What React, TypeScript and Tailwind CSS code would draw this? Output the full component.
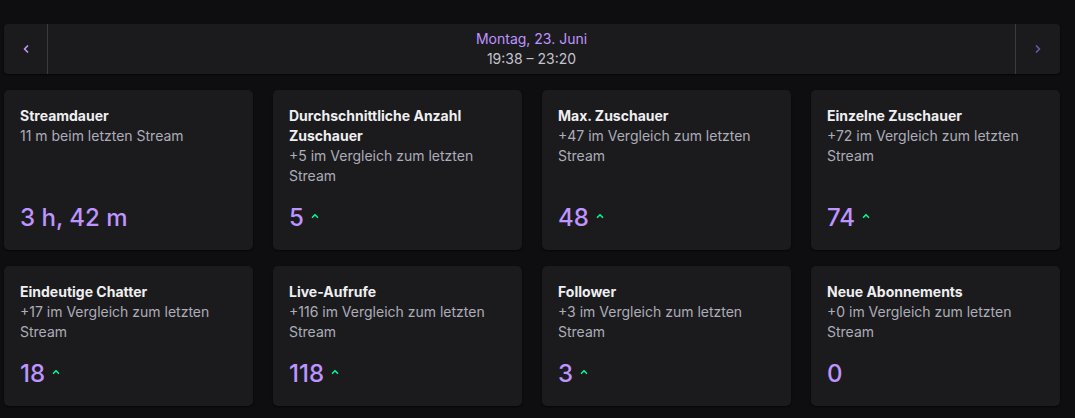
import { ChevronLeft, ChevronRight, ChevronUp } from 'lucide-react';

type Stat = {
  title: string;
  sub: string;
  value: string;
  up?: boolean;
};

const stats: Stat[] = [
  { title: 'Streamdauer', sub: '11 m beim letzten Stream', value: '3 h, 42 m' },
  { title: 'Durchschnittliche Anzahl Zuschauer', sub: '+5 im Vergleich zum letzten Stream', value: '5', up: true },
  { title: 'Max. Zuschauer', sub: '+47 im Vergleich zum letzten Stream', value: '48', up: true },
  { title: 'Einzelne Zuschauer', sub: '+72 im Vergleich zum letzten Stream', value: '74', up: true },
  { title: 'Eindeutige Chatter', sub: '+17 im Vergleich zum letzten Stream', value: '18', up: true },
  { title: 'Live-Aufrufe', sub: '+116 im Vergleich zum letzten Stream', value: '118', up: true },
  { title: 'Follower', sub: '+3 im Vergleich zum letzten Stream', value: '3', up: true },
  { title: 'Neue Abonnements', sub: '+0 im Vergleich zum letzten Stream', value: '0' },
];

export default function App() {
  return (
    <div className="min-h-[418px] bg-[#0e0e10] pl-1 pr-[15px] pt-6 pb-3 font-['Inter',sans-serif] text-sm">
      {/* Date navigation */}
      <div className="flex h-[50px] rounded-sm bg-[#1b1b1e] shadow-[0_1px_2px_rgba(0,0,0,0.6)]">
        <button className="flex w-[44px] items-center justify-center border-r border-[#3a3a3f] text-[#bf94ff]">
          <ChevronLeft className="h-3 w-3" strokeWidth={3.5} />
        </button>
        <div className="flex flex-1 flex-col items-center justify-center leading-5">
          <div className="text-[#bf94ff]">Montag, 23. Juni</div>
          <div className="text-[#c4c4cc]">19:38 – 23:20</div>
        </div>
        <button className="flex w-[45px] items-center justify-center border-l border-[#3a3a3f] text-[#6e57a0]">
          <ChevronRight className="h-3 w-3" strokeWidth={3.5} />
        </button>
      </div>

      {/* Stat cards */}
      <div className="mt-4 grid grid-cols-4 gap-x-5 gap-y-4">
        {stats.map((s) => (
          <StatCard key={s.title} stat={s} />
        ))}
      </div>
    </div>
  );
}

function StatCard({ stat }: { stat: Stat }) {
  return (
    <div className="flex flex-col justify-between rounded-[5px] bg-[#1b1b1e] p-4 shadow-[0_1px_2px_rgba(0,0,0,0.6)]">
      <div className="leading-5">
        <div className="font-bold text-[#efeff1]">{stat.title}</div>
        <div className="text-[#adadb8]">{stat.sub}</div>
      </div>
      <div className="mt-4 flex items-center gap-1.5 leading-8">
        <span className="text-[24px] font-medium text-[#bf94ff]">{stat.value}</span>
        {stat.up && <ChevronUp className="-mt-1 h-2.5 w-2.5 text-[#00f593]" strokeWidth={4} />}
      </div>
    </div>
  );
}
